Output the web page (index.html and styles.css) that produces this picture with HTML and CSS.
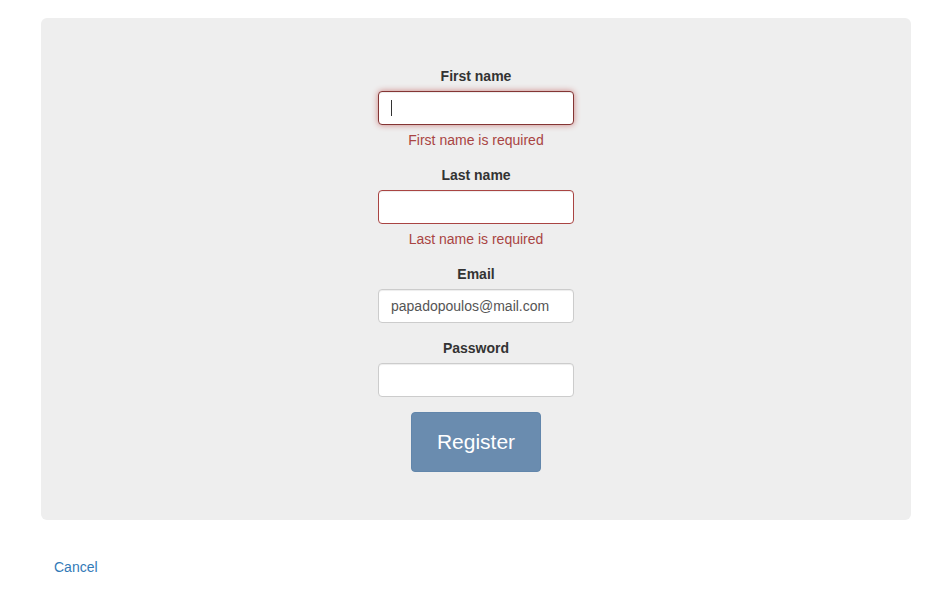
FILE: index.html
```html
<!DOCTYPE html>
<html lang="en">
<head>
  <meta charset="UTF-8">
  <title>Register</title>
  <link rel="stylesheet" href="styles.css">
</head>
<body>
  <div class="page">
    <div class="jumbotron">
      <form class="register-form">
        <div class="form-group has-error">
          <label for="firstName">First name</label>
          <div class="input-wrap">
            <input id="firstName" type="text" class="form-control focused">
            <span class="caret-line"></span>
          </div>
          <span class="help-block">First name is required</span>
        </div>
        <div class="form-group has-error">
          <label for="lastName">Last name</label>
          <input id="lastName" type="text" class="form-control">
          <span class="help-block">Last name is required</span>
        </div>
        <div class="form-group">
          <label for="email">Email</label>
          <input id="email" type="email" class="form-control" value="papadopoulos@mail.com">
        </div>
        <div class="form-group">
          <label for="password">Password</label>
          <input id="password" type="password" class="form-control">
        </div>
        <button type="submit" class="btn-register" disabled>Register</button>
      </form>
    </div>
    <a href="#" class="cancel-link">Cancel</a>
  </div>
</body>
</html>
```

FILE: styles.css
```css
* {
  box-sizing: border-box;
}
body {
  margin: 0;
  background-color: #fff;
  font-family: 'Liberation Sans', Arial, sans-serif;
  font-size: 14px;
  line-height: 20px;
  color: #333;
}
.page {
  padding: 18px 38px 0 41px;
}
.jumbotron {
  background-color: #eee;
  border-radius: 6px;
  padding: 48px 0;
  margin-bottom: 30px;
}
.register-form {
  display: flex;
  flex-direction: column;
  align-items: center;
}
.form-group {
  width: 196px;
  margin-bottom: 15px;
  text-align: center;
}
.form-group label {
  display: block;
  font-weight: bold;
  margin-bottom: 5px;
}
.input-wrap {
  position: relative;
}
.form-control {
  display: block;
  width: 100%;
  height: 34px;
  padding: 6px 12px;
  font-family: inherit;
  font-size: 14px;
  line-height: 20px;
  color: #555;
  background-color: #fff;
  border: 1px solid #ccc;
  border-radius: 4px;
  box-shadow: inset 0 1px 1px rgba(0,0,0,0.075);
  outline: none;
}
.has-error .form-control {
  border-color: #a94442;
}
.has-error .form-control.focused {
  border-color: #843534;
  box-shadow: inset 0 1px 1px rgba(0,0,0,0.075), 0 0 6px #ce8483;
}
.caret-line {
  position: absolute;
  left: 13px;
  top: 9px;
  width: 1px;
  height: 16px;
  background-color: #333;
}
.help-block {
  display: block;
  margin-top: 5px;
  color: #a94442;
}
.btn-register {
  font-family: inherit;
  font-size: 21px;
  line-height: 28px;
  padding: 15px 25px;
  color: #fff;
  background-color: #6a8caf;
  border: 1px solid #6286ab;
  border-radius: 4px;
  cursor: not-allowed;
}
.cancel-link {
  display: inline-block;
  margin: 7px 0 0 13px;
  color: #337ab7;
  text-decoration: none;
}
```
